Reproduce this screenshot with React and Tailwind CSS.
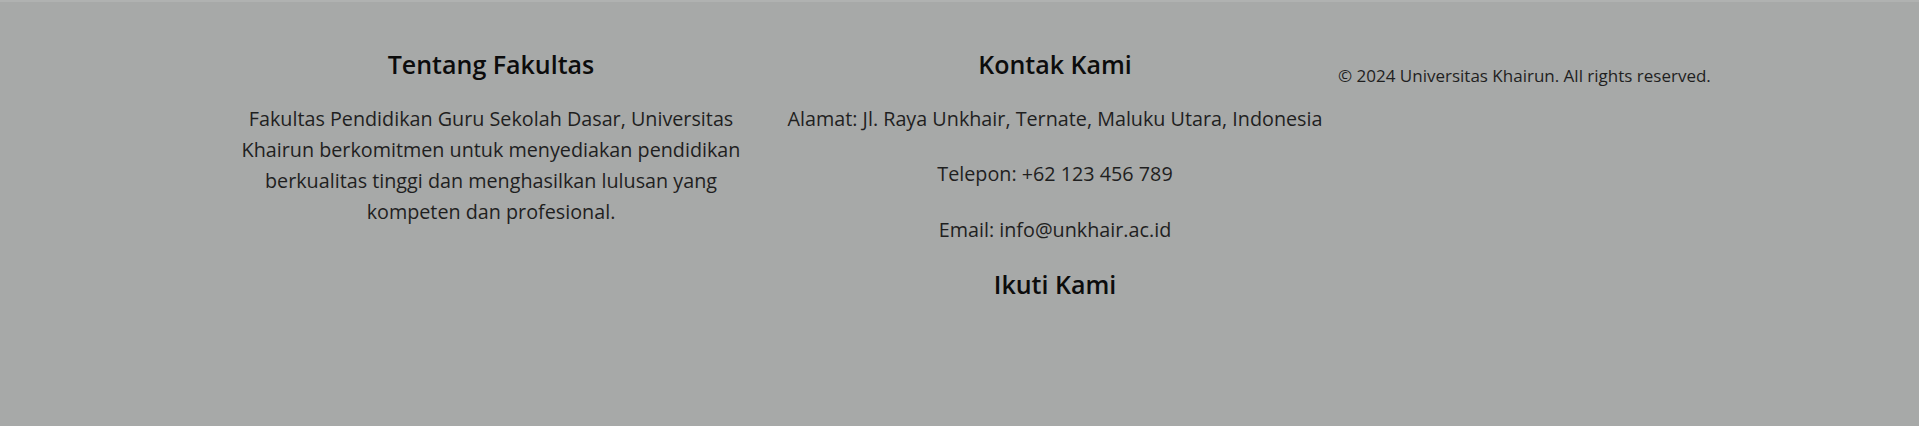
export default function App() {
  return (
    <div className="w-[1919px] h-[426px] bg-[#a7a9a8] border-t-2 border-[#b0b2b1] overflow-hidden" style={{ fontFamily: '"Open Sans", "Noto Sans", sans-serif' }}>
      <div className="flex items-start pl-[216px] pt-[44px]">
        <div className="w-[550px] px-[22px] text-center">
          <h3 className="text-[25px] leading-[36px] font-semibold text-[#0c0c0c]">Tentang Fakultas</h3>
          <p className="mt-[21px] text-[19.75px] leading-[31px] text-[#1f1f1f]">
            Fakultas Pendidikan Guru Sekolah Dasar, Universitas Khairun berkomitmen untuk menyediakan pendidikan berkualitas tinggi dan menghasilkan lulusan yang kompeten dan profesional.
          </p>
        </div>
        <div className="ml-[6px] w-[566px] text-center">
          <h3 className="text-[25px] leading-[36px] font-semibold text-[#0c0c0c]">Kontak Kami</h3>
          <p className="mt-[21px] text-[19.75px] leading-[31px] text-[#1f1f1f]">Alamat: Jl. Raya Unkhair, Ternate, Maluku Utara, Indonesia</p>
          <p className="mt-[24px] text-[19.75px] leading-[31px] text-[#1f1f1f]">Telepon: +62 123 456 789</p>
          <p className="mt-[25px] text-[19.75px] leading-[31px] text-[#1f1f1f]">Email: info@unkhair.ac.id</p>
          <h3 className="mt-[21px] text-[25px] leading-[36px] font-semibold text-[#0c0c0c]">Ikuti Kami</h3>
        </div>
        <div className="pt-[18px] text-left">
          <p className="text-[17px] leading-[24px] text-[#1f1f1f] whitespace-nowrap">© 2024 Universitas Khairun. All rights reserved.</p>
        </div>
      </div>
    </div>
  );
}
